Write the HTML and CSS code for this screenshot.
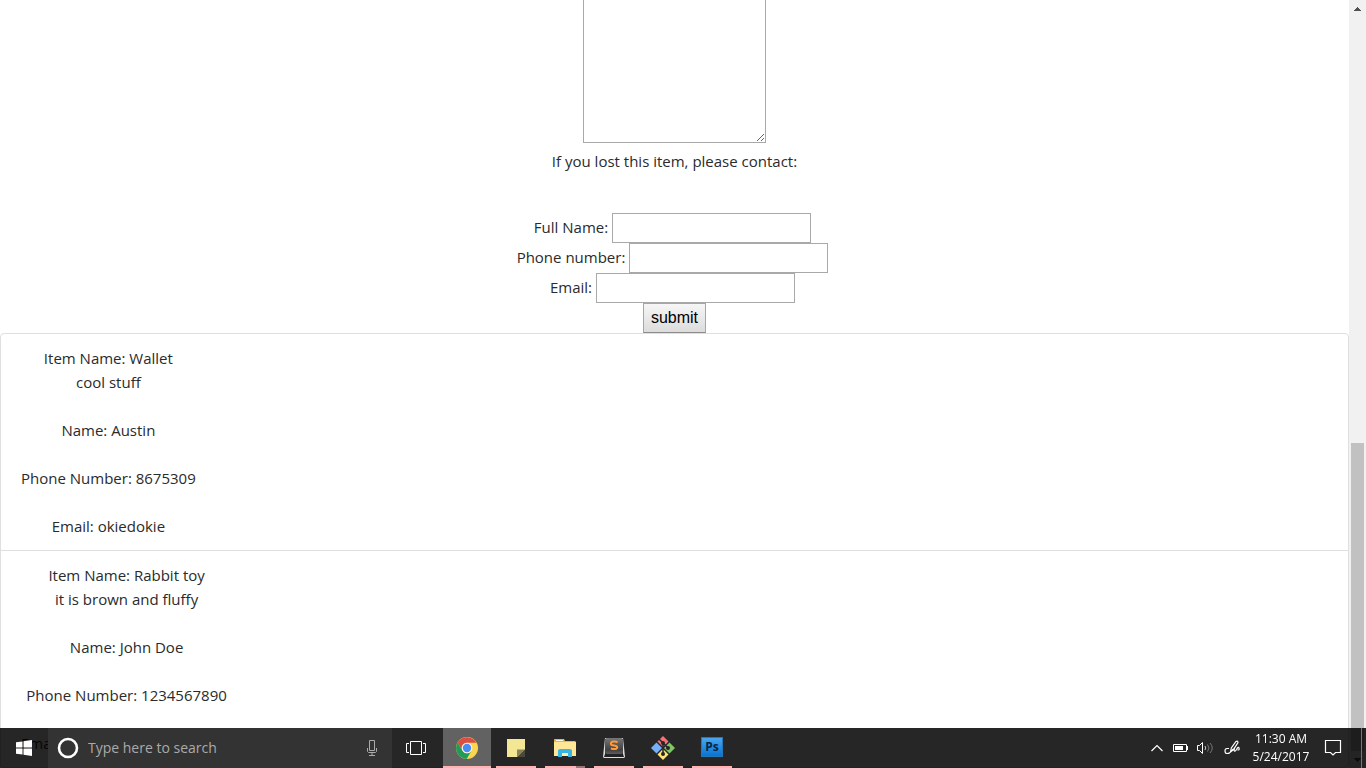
FILE: index.html
```html
<!DOCTYPE html>
<html lang="en">
<head>
<meta charset="utf-8">
<title>Lost and Found</title>
<link rel="stylesheet" href="styles.css">
</head>
<body>
<div class="viewport">
  <main class="page">
    <form class="report-form">
      <textarea class="description" aria-label="Description"></textarea>
      <p class="contact-note">If you lost this item, please contact:</p>
      <div class="field"><label for="full-name">Full Name:</label><input id="full-name" type="text"></div>
      <div class="field"><label for="phone">Phone number:</label><input id="phone" type="text"></div>
      <div class="field"><label for="email">Email:</label><input id="email" type="text"></div>
      <button class="submit" type="button">submit</button>
    </form>
    <ul class="item-list">
      <li class="item">
        <div class="item-body">
          <p>Item Name: Wallet<br>cool stuff</p>
          <p>Name: Austin</p>
          <p>Phone Number: 8675309</p>
          <p>Email: okiedokie</p>
        </div>
      </li>
      <li class="item">
        <div class="item-body">
          <p>Item Name: Rabbit toy<br>it is brown and fluffy</p>
          <p>Name: John Doe</p>
          <p>Phone Number: 1234567890</p>
          <p>Email: johndoe@example.com</p>
        </div>
      </li>
    </ul>
  </main>
  <div class="scrollbar">
    <svg class="arrow" viewBox="0 0 17 17"><path d="M8 7h1v1h1v1h1v1h1v1H5v-1h1V9h1V8h1z" fill="#505050"/></svg>
    <div class="track"><div class="thumb"></div></div>
    <svg class="arrow" viewBox="0 0 17 17"><path d="M5 7h7v1h-1v1h-1v1H9v1H8v-1H7V9H6V8H5z" fill="#505050"/></svg>
  </div>
</div>

<footer class="taskbar">
  <button class="task-button" type="button" aria-label="Start">
    <svg width="16" height="16" viewBox="0 0 16 16" fill="#fff"><path d="M0 2.3 6.5 1.400V7.500H0zM7.500 1.200 16 0v7.500H7.500zM0 8.500h6.500v6.100L0 13.700zM7.500 8.500H16V16l-8.500-1.200z"/></svg>
  </button>
  <div class="search">
    <svg width="22" height="22" viewBox="0 0 22 22" fill="none"><circle cx="11" cy="11" r="9" stroke="#fff" stroke-width="2.600"/></svg>
    <input class="search-input" type="text" placeholder="Type here to search" aria-label="Search">
    <svg width="12" height="18" viewBox="0 0 12 18" fill="none" stroke="#aaa"><path d="M3.500 1.500h5v10h-5zM1.500 9v3.500l1 1h7l1-1V9M6 13.500v3M3 16.500h6"/></svg>
  </div>
  <button class="task-button task-view" type="button" aria-label="Task View">
    <svg width="20" height="16" viewBox="0 0 20 16" fill="none" stroke="#fff"><path d="M4.500 1.500h11v13h-11zM3 3.500H.5v9H3M17 3.500h2.500v9H17"/></svg>
  </button>
  <div class="apps">
    <button class="task-button app active" type="button" aria-label="Chrome">
      <svg width="22" height="22" viewBox="0 0 22 22"><circle cx="11" cy="11" r="11" fill="#f9d64c"/><path d="M1.500 5.500A11 11 0 0 1 20.500 5.700H11a5.300 5.300 0 0 0-4.600 7.900z" fill="#d94f43"/><path d="M1.500 5.500A11 11 0 0 0 10.600 22l5-8.400a5.300 5.300 0 0 1-9.200 0z" fill="#229a5b"/><circle cx="11" cy="11" r="5.300" fill="#f4f4f4"/><circle cx="11" cy="11" r="4.200" fill="#4b8bf4"/></svg>
    </button>
    <button class="task-button app" type="button" aria-label="Sticky Notes">
      <svg width="18" height="18" viewBox="0 0 18 18"><path d="M0 0h18v11l-7 7H0z" fill="#f3e796"/><path d="M10 10.500h8L10 18z" fill="#8a8358"/><path d="M18 10.500V18h-8z" fill="#4a4839"/></svg>
    </button>
    <button class="task-button app grouped" type="button" aria-label="File Explorer">
      <svg width="22" height="20" viewBox="0 0 22 20"><path d="M0 2V1.500Q0 1 1 1h9l1 2h10l1 1v14H0z" fill="#e8b64a"/><path d="M0 4h22v14H0z" fill="#ffe795"/><path d="M2 2h7v1H2z" fill="#fff8da"/><path d="M4 19v-7l2-1h10l2 1v7h-4v-4H8v4z" fill="#38b5e4"/><path d="M8 15h6v3H8z" fill="#fff0b0"/></svg>
    </button>
    <button class="task-button app" type="button" aria-label="Sublime Text">
      <svg width="24" height="22" viewBox="0 0 24 22"><defs><linearGradient id="key" x2="0" y2="1"><stop stop-color="#777"/><stop offset=".75" stop-color="#414141"/><stop offset="1" stop-color="#5d5d5d"/></linearGradient></defs><path d="M3 1h18l2 19-1 1H2l-1-1z" fill="#ddd"/><path d="M3 2h18v15l1 3H2l1-3z" fill="#222"/><rect x="3" y="1" width="18" height="16" rx="2" fill="url(#key)"/><path d="M15.500 5.300C13 3.700 8.700 4.300 8.900 6.800c.2 2.300 6.300 1.300 6.300 3.500 0 2-3.500 2.300-6.300 1" fill="none" stroke="#ff9a3b" stroke-width="2"/></svg>
    </button>
    <button class="task-button app" type="button" aria-label="Git">
      <svg width="24" height="24" viewBox="0 0 24 24"><path d="m12 0 5.500 5.500L12 11 6.500 5.500z" fill="#f47277"/><path d="m18.500 6.500 5.500 5.500-5.500 5.500L13 12z" fill="#80c566"/><path d="m12 13 5.500 5.500L12 24l-5.500-5.500z" fill="#ffe479"/><path d="m5.500 6.500L11 12l-5.500 5.500L0 12z" fill="#76aff9"/><path d="m8 3 4 4v12M12 7l5 5" fill="none" stroke="#262626" stroke-width="1.500"/><g fill="#262626"><circle cx="12" cy="7" r="2"/><circle cx="17" cy="12" r="2"/><circle cx="12" cy="18" r="2"/></g></svg>
    </button>
    <button class="task-button app" type="button" aria-label="Photoshop"><span class="ps-logo">Ps</span></button>
  </div>
  <div class="tray">
    <button class="tray-button" type="button" aria-label="Show hidden icons"><svg width="12" height="8" viewBox="0 0 12 8" fill="none" stroke="#fff" stroke-width="1.200"><path d="m.5 7 5.500-5.500L11.500 7"/></svg></button>
    <button class="tray-button" type="button" aria-label="Battery"><svg width="16" height="10" viewBox="0 0 16 10"><path d="M.5 1.500h13v7H.5z" fill="none" stroke="#fff"/><path d="M2 3h8v4H2zM14 3h1v4h-1z" fill="#fff"/></svg></button>
    <button class="tray-button" type="button" aria-label="Volume"><svg width="17" height="14" viewBox="0 0 17 14" fill="none"><path d="M.5 4.500h2l3-3v11l-3-3h-2z" stroke="#fff"/><path d="M8 5q1.500 2 0 4" stroke="#ccc"/><path d="M10.500 3.500q3 3.500 0 7M13 2q4.500 5 0 10" stroke="#777"/></svg></button>
    <button class="tray-button pen" type="button" aria-label="Windows Ink"><svg width="18" height="16" viewBox="0 0 18 16" fill="none" stroke="#fff" stroke-width="1.200"><path d="m6.500 12 .8-4L12 1.500q2-1 2 1L9.500 9.500l-3 2.500M5 8.500H3q-2 0-2 2.500t2 2.500c4 0 4-3 6.500-4.500M10.500 8c-1 4 .5 4 2 1.500 1-2 2-3 2.500-1.500s0 2-1.500 2"/></svg></button>
    <time class="clock" datetime="2017-05-24T11:30"><span>11:30 AM</span><span>5/24/2017</span></time>
    <button class="tray-button notifications" type="button" aria-label="Notifications"><svg width="18" height="16" viewBox="0 0 18 16" fill="none" stroke="#fff" stroke-width="1.200"><path d="M1.500.5h15v12h-5L9 15l-2.500-2.500h-5z"/></svg></button>
    <button class="show-desktop" type="button" aria-label="Show desktop"></button>
  </div>
</footer>
</body>
</html>
```
FILE: styles.css
```css
* { box-sizing: border-box; }

body {
  margin: 0;
  overflow: hidden;
  background: #fff;
  color: #292b2c;
  font: 15px/24px "Segoe UI", "Open Sans", "Noto Sans", sans-serif;
}

button, input, textarea { font: inherit; color: inherit; }
svg { display: block; flex: none; }
p { margin: 0; }

.viewport { display: flex; height: 100vh; }
.page { flex: 1; min-width: 0; overflow: hidden; }

.report-form { display: flex; flex-direction: column; align-items: center; }

.description {
  width: 183px;
  height: 143px;
  margin-bottom: 6px;
  border: 1px solid #a9a9a9;
  border-top: 0;
  border-radius: 0;
  background: #fff;
  resize: both;
}

.contact-note { margin-bottom: 40px; }

.field { display: flex; align-items: center; gap: 4px; padding-right: 4px; }
.field label { padding-bottom: 2px; }
.field input {
  width: 199px;
  height: 30px;
  padding: 2px;
  border: 1px solid #a9a9a9;
  background: #fff;
}

.submit {
  height: 30px;
  padding: 0 7px;
  border: 1px solid #a6a6a6;
  border-bottom-color: #8c8c8c;
  border-radius: 0;
  background: linear-gradient(#f6f6f6, #dcdcdc);
  color: #000;
  font-family: Arial, "Liberation Sans", sans-serif;
  font-size: 16px;
}

.item-list {
  margin: 0;
  padding: 0;
  border: 1px solid #dfdfdf;
  border-radius: 4px;
  list-style: none;
}
.item { display: flex; padding: 12px 20px; }
.item + .item { border-top: 1px solid #dfdfdf; }
.item-body { display: grid; gap: 24px; text-align: center; }

.scrollbar { display: flex; flex-direction: column; width: 17px; background: #f1f1f1; }
.arrow { width: 17px; height: 17px; }
.track { display: flex; flex: 1; flex-direction: column; justify-content: flex-end; padding: 0 2px; }
.thumb { height: 42%; background: #c1c1c1; }

.taskbar {
  position: fixed;
  inset: auto 0 0;
  display: flex;
  height: 40px;
  background: rgba(0, 0, 0, 0.85);
  color: #fff;
}

.task-button, .tray-button, .show-desktop { padding: 0; border: 0; background: none; }
.task-button { display: grid; place-items: center; width: 48px; height: 40px; }
.task-view { margin-right: 3px; }

.search {
  display: flex;
  align-items: center;
  gap: 9px;
  width: 344px;
  padding: 0 14px 0 9px;
  background: #333;
}
.search-input { flex: 1; min-width: 0; padding: 0; border: 0; outline: 0; background: none; font-size: 14px; }
.search-input::placeholder { color: #aaa; opacity: 1; }

.apps { display: flex; gap: 1px; }
.task-button.app {
  background: linear-gradient(#ffb3b3, #ffb3b3) bottom / 40px 2px no-repeat;
}
.task-button.active { background-color: #626262; background-size: 100% 2px; }
.task-button.grouped { background-image: linear-gradient(to right, #ffb3b3 31px, #9a7476 31px); }

.ps-logo {
  width: 22px;
  height: 20px;
  margin-bottom: 3px;
  border: 1px solid #2677b9;
  background: linear-gradient(#48a7ef, #0873d2);
  color: #082642;
  font-size: 12px;
  font-weight: 700;
  line-height: 18px;
}

.tray { display: flex; align-items: center; margin-left: auto; }
.tray-button { display: grid; place-items: center; width: 24px; height: 40px; }
.pen { width: 32px; }
.clock {
  display: flex;
  flex-direction: column;
  width: 64px;
  font-size: 12px;
  line-height: 18px;
  text-align: center;
}
.notifications { width: 40px; }
.show-desktop { width: 5px; height: 40px; margin-left: 8px; border-left: 1px solid #777; }
```
